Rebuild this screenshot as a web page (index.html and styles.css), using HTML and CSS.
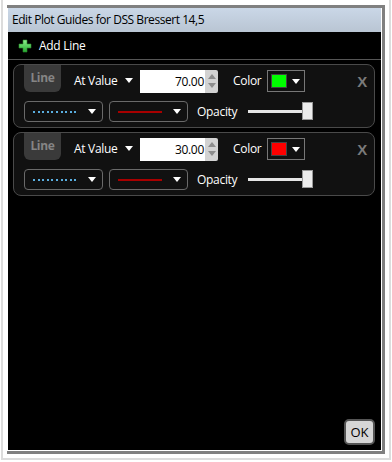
FILE: index.html
```html
<!DOCTYPE html>
<html>
<head>
  <meta name="viewport" content="width=device-width, initial-scale=1">
  <link rel="stylesheet" href="styles.css">
</head>
<body>

  <!-- Screenshot shadow -->
  <div class="shot">
    <!-- Dialog window -->
    <div class="frame">
      <div class="titlebar">Edit Plot Guides for DSS Bressert 14,5</div>

      <div class="client">
        <!-- Toolbar -->
        <div class="toolbar">
          <svg class="plus" width="14" height="14" viewBox="0 0 14 14">
            <defs>
              <linearGradient id="pg" x1="0" y1="0" x2="0" y2="1">
                <stop offset="0" stop-color="#8ef08e"/>
                <stop offset="1" stop-color="#22a82e"/>
              </linearGradient>
            </defs>
            <path d="M5 1h4v4h4v4h-4v4h-4v-4h-4v-4h4z" fill="url(#pg)" stroke="#2c8a2c" stroke-width="0.6" stroke-linejoin="round"/>
          </svg>
          <span>Add Line</span>
        </div>

        <!-- Guide list -->
        <div class="guides">
          <div class="guide">
            <div class="row">
              <div class="tab">Line</div>
              <div class="picker value-pick">At Value <span class="tri"></span></div>
              <div class="num">
                <div class="num-text">70.00</div>
                <div class="spin"><span class="up"></span><span class="down"></span></div>
              </div>
              <div class="lbl color-lbl">Color</div>
              <div class="swatch"><span class="chip green"></span><span class="tri"></span></div>
              <div class="close">X</div>
            </div>
            <div class="row row2">
              <div class="drop"><span class="dots"></span><span class="tri"></span></div>
              <div class="drop"><span class="solid"></span><span class="tri"></span></div>
              <div class="lbl opac-lbl">Opacity</div>
              <div class="slider"><span class="track"></span><span class="thumb"></span></div>
            </div>
          </div>

          <div class="guide">
            <div class="row">
              <div class="tab">Line</div>
              <div class="picker value-pick">At Value <span class="tri"></span></div>
              <div class="num">
                <div class="num-text">30.00</div>
                <div class="spin"><span class="up"></span><span class="down"></span></div>
              </div>
              <div class="lbl color-lbl">Color</div>
              <div class="swatch"><span class="chip red"></span><span class="tri"></span></div>
              <div class="close">X</div>
            </div>
            <div class="row row2">
              <div class="drop"><span class="dots"></span><span class="tri"></span></div>
              <div class="drop"><span class="solid"></span><span class="tri"></span></div>
              <div class="lbl opac-lbl">Opacity</div>
              <div class="slider"><span class="track"></span><span class="thumb"></span></div>
            </div>
          </div>
        </div>

        <!-- Footer -->
        <div class="footer">
          <button class="ok">OK</button>
        </div>
      </div>
    </div>
  </div>

</body>
</html>
```

FILE: styles.css
```css
/* =====================
   BASE
   ===================== */
body {
  margin: 0;
  background: #fff;
  font-family: "Open Sans", "Noto Sans", sans-serif;
  font-size: 12px;
  letter-spacing: -0.3px;
}
* {
  box-sizing: border-box;
}

/* Screenshot drop shadow */
.shot {
  margin-left: 1px;
  width: 390px;
  height: 460px;
  padding: 5px 0 0 4px;
  border: 2px solid #dcdcdc;
  border-top: none;
}

/* =====================
   WINDOW FRAME
   ===================== */
.frame {
  width: 378px;
  height: 449px;
  background: #fff;
  border: solid #808080;
  border-width: 3px 3px 3px 0;
  padding: 0 1px 1px 1px;
  display: flex;
  flex-direction: column;
}
.titlebar {
  height: 24px;
  line-height: 24px;
  padding-left: 4px;
  background: linear-gradient(#cad7e7, #b9c5d3);
  color: #000;
  font-size: 12px;
  letter-spacing: -0.45px;
}
.client {
  flex: 1;
  background: #000;
  display: flex;
  flex-direction: column;
  color: #fff;
}

/* =====================
   TOOLBAR
   ===================== */
.toolbar {
  height: 28px;
  border-bottom: 1px solid #555;
  display: flex;
  align-items: center;
  padding-left: 10px;
  font-size: 12px;
}
.plus {
  margin-right: 7px;
}

/* =====================
   GUIDE PANELS
   ===================== */
.guides {
  padding: 4px 6px 0 5px;
  display: flex;
  flex-direction: column;
  gap: 4px;
}
.guide {
  height: 64px;
  background: #111;
  border: 1px solid #4a4a4a;
  border-radius: 8px;
  padding: 0 0 0 10px;
}
.row {
  height: 31px;
  display: flex;
  align-items: center;
}
.row2 {
  height: 21px;
  margin-top: 5px;
}
.tab {
  align-self: flex-start;
  width: 37px;
  height: 27px;
  line-height: 25px;
  text-align: center;
  background: #3a3a3a;
  color: #858585;
  font-weight: 700;
  border-radius: 0 0 6px 6px;
}
.picker {
  margin-left: 13px;
  width: 59px;
  display: flex;
  align-items: center;
  justify-content: space-between;
}
.tri {
  width: 0;
  height: 0;
  border-left: 4px solid transparent;
  border-right: 4px solid transparent;
  border-top: 5px solid #fff;
}
.num {
  margin-left: 7px;
  display: flex;
  height: 23px;
  margin-top: 1px;
}
.num-text {
  width: 65px;
  background: #fff;
  color: #000;
  text-align: right;
  line-height: 23px;
  padding-right: 1px;
}
.spin {
  width: 13px;
  background: #d2d2d2;
  border-radius: 0 2px 2px 0;
  display: flex;
  flex-direction: column;
  align-items: center;
  justify-content: space-around;
  padding: 3px 0;
}
.up, .down {
  width: 0;
  height: 0;
  border-left: 4px solid transparent;
  border-right: 4px solid transparent;
}
.up {
  border-bottom: 5px solid #8c8c8c;
}
.down {
  border-top: 5px solid #8c8c8c;
}
.color-lbl {
  margin-left: 15px;
  width: 34px;
}
.swatch {
  width: 38px;
  height: 22px;
  margin-top: 1px;
  border: 1px solid #777;
  display: flex;
  align-items: center;
  padding: 0 4px 0 3px;
  justify-content: space-between;
}
.chip {
  width: 16px;
  height: 14px;
  border: 1px solid #444;
}
.green {
  background: #00ff00;
}
.red {
  background: #ff0000;
}
.close {
  margin-left: auto;
  margin-right: 7px;
  margin-top: 2px;
  color: #7a7a7a;
  font-weight: 700;
  font-size: 15px;
  font-family: "Liberation Sans", sans-serif;
}

/* Row 2: line style drop-downs and opacity */
.drop {
  width: 79px;
  height: 21px;
  border: 1px solid #6a6a6a;
  border-radius: 4px;
  display: flex;
  align-items: center;
  justify-content: space-between;
  padding: 0 6px 0 8px;
  margin-right: 6px;
}
.dots {
  width: 45px;
  height: 2px;
  background: repeating-linear-gradient(90deg, #5aaee0 0 2px, transparent 2px 4.6px);
}
.solid {
  width: 44px;
  border-top: 2px solid #a80000;
}
.opac-lbl {
  margin-left: 3px;
  width: 51px;
}
.slider {
  position: relative;
  width: 65px;
  height: 21px;
}
.track {
  position: absolute;
  left: 0;
  right: 2px;
  top: 9px;
  height: 3px;
  background: #e6e6e6;
}
.thumb {
  position: absolute;
  right: 0;
  top: 1px;
  width: 11px;
  height: 18px;
  background: #ececec;
  border: 1px solid #999;
}

/* =====================
   FOOTER
   ===================== */
.footer {
  margin-top: auto;
  display: flex;
  justify-content: flex-end;
  padding: 0 6px 5px 0;
}
.ok {
  width: 31px;
  height: 26px;
  padding: 0;
  background: #d6d6d6;
  border: 2px solid #555;
  border-radius: 5px;
  font-family: "Open Sans", sans-serif;
  font-size: 13px;
  color: #000;
}
```
